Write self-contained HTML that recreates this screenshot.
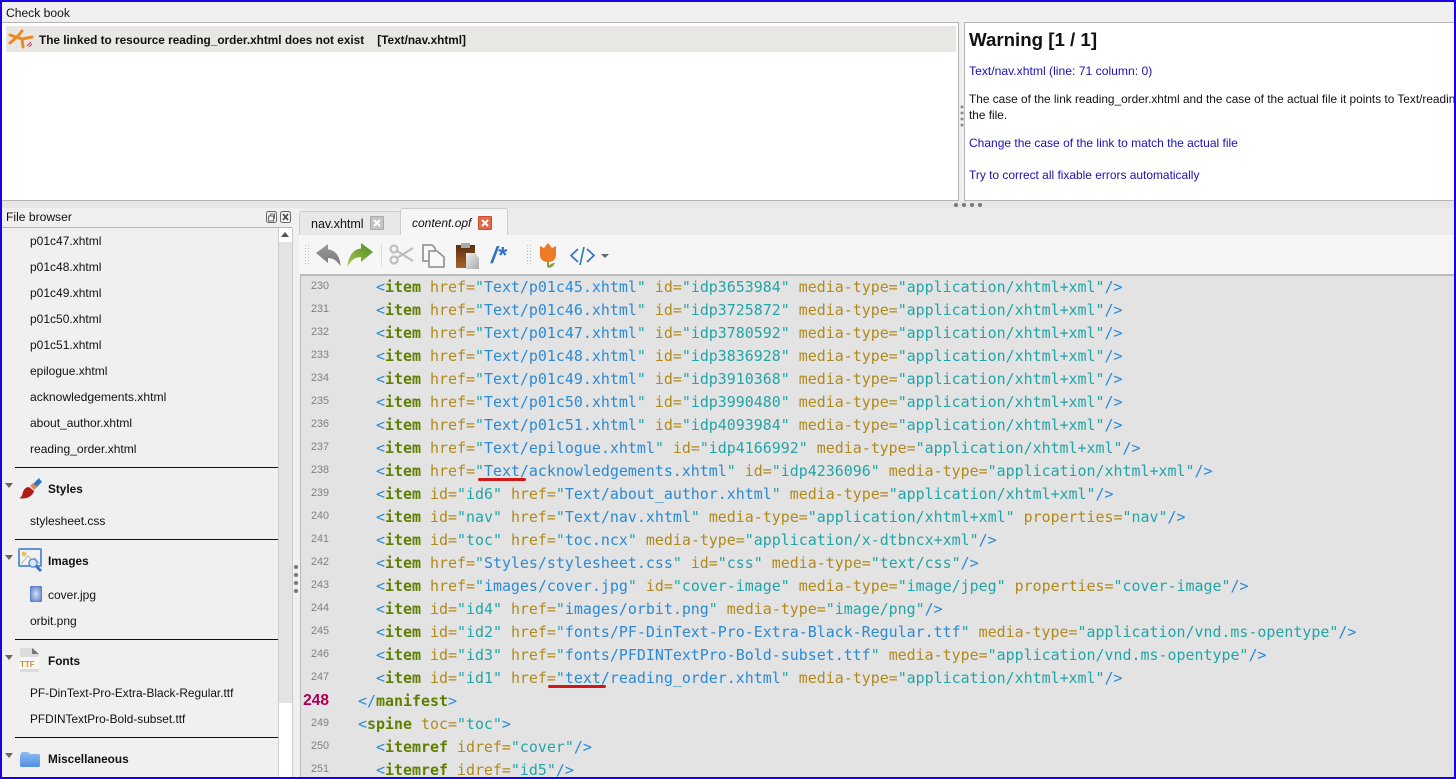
<!DOCTYPE html>
<html><head><meta charset="utf-8"><style>
html,body{margin:0;padding:0;width:1456px;height:779px;overflow:hidden;background:#f0f0f0}
body{position:relative;font-family:"Liberation Sans",sans-serif;font-size:12px;color:#111}
.a{position:absolute}
.t{position:absolute;white-space:pre;font-size:12px;line-height:16px;color:#111;margin-top:-1px}
.b{font-weight:bold;font-size:11.8px;margin-top:0}
.hr{position:absolute;left:15px;width:263px;height:1px;background:#111}
.lk{color:#1a12b8}
#code{position:absolute;left:300px;top:275px;width:1154px;height:502px;background:#e3e3e3;overflow:hidden;border-left:1px solid #bbb;border-top:1px solid #bbb;box-sizing:border-box}
.l{position:absolute;left:0;margin-top:1px;white-space:pre;font-family:"DejaVu Sans Mono",monospace;font-size:14.95px;line-height:23px;height:23px;color:#2a8ad6}
.n{position:absolute;left:10px;width:18px;text-align:right;font-family:"Liberation Sans",sans-serif;font-size:10.8px;line-height:20px;color:#808080}
i{font-style:normal;font-weight:bold;color:#5f7f00}
u{text-decoration:none;color:#b08a1a}
s{text-decoration:none;color:#22a5a8}
</style></head><body>

<div class="t" style="left:6px;top:6px;font-size:12.1px">Check book</div>
<div class="a" style="left:2px;top:22px;width:957px;height:179px;background:#fff;border:1px solid #b5b5b5;border-left:0;box-sizing:border-box"></div>
<div class="a" style="left:6px;top:26px;width:950px;height:26px;background:#e8e7e3"></div>
<svg class="a" style="left:8px;top:28px" width="26" height="22" viewBox="0 0 26 22"><path d="M2 7 L14 11 L24 9 M14 3 L10 8 L2 15 M14 11 L15 19" fill="none" stroke="#ee8a1c" stroke-width="3" stroke-linecap="round" stroke-linejoin="round"/><path d="M19 18l4-4M21 19l3-3" stroke="#d23a4a" stroke-width="1"/></svg>
<div class="t b" style="left:39px;top:32px">The linked to resource reading_order.xhtml does not exist&#160;&#160;&#160; [Text/nav.xhtml]</div>

<div class="a" style="left:964px;top:22px;width:490px;height:179px;background:#fff;border:1px solid #b5b5b5;border-right:0;box-sizing:border-box"></div>
<div class="t b" style="left:969px;top:30px;font-size:18.7px;line-height:20px">Warning [1 / 1]</div>
<div class="t lk" style="left:969px;top:64px;font-size:12.15px">Text/nav.xhtml (line: 71 column: 0)</div>
<div class="a" style="left:969px;top:91px;width:485px;height:34px;overflow:hidden"><div class="t" style="left:0;top:1px;font-size:11.85px">The case of the link reading_order.xhtml and the case of the actual file it points to Text/reading_order.xhtml differ
the file.</div></div>
<div class="t lk" style="left:969px;top:136px">Change the case of the link to match the actual file</div>
<div class="t lk" style="left:969px;top:168px;font-size:11.95px">Try to correct all fixable errors automatically</div>
<svg class="a" style="left:960px;top:105px" width="4" height="24"><g fill="#888"><circle cx="2" cy="2" r="1.5"/><circle cx="2" cy="8" r="1.5"/><circle cx="2" cy="14" r="1.5"/><circle cx="2" cy="20" r="1.5"/></g></svg>
<div class="a" style="left:0;top:201px;width:1456px;height:7px;background:#e6e6e6"></div>
<svg class="a" style="left:953px;top:202px" width="30" height="6"><g fill="#777"><circle cx="3" cy="3" r="2"/><circle cx="11" cy="3" r="2"/><circle cx="19" cy="3" r="2"/><circle cx="27" cy="3" r="2"/></g></svg>

<!-- file browser -->
<div class="t" style="left:6px;top:210px;font-size:12.1px">File browser</div>
<svg class="a" style="left:266px;top:211px" width="26" height="13" viewBox="0 0 26 13"><rect x=".5" y=".5" width="10" height="11" rx="2" fill="#f4f4f4" stroke="#666"/><rect x="2.5" y="5" width="5" height="5" fill="none" stroke="#666"/><path d="M4.5 5V3h4v4H7.5" fill="none" stroke="#666"/><rect x="14.5" y=".5" width="10" height="11" rx="2" fill="#f4f4f4" stroke="#666"/><path d="M17 3l5 6M22 3l-5 6" stroke="#444" stroke-width="1.6"/></svg>
<div class="a" style="left:2px;top:227px;width:290px;height:1px;background:#b5b5b5"></div>
<div class="a" style="left:278px;top:228px;width:15px;height:549px;background:#fff;border-left:1px solid #ccc;box-sizing:border-box"></div>
<div class="a" style="left:279px;top:242px;width:14px;height:461px;background:#e3e3e3"></div>
<div class="a" style="left:281px;top:232px;width:0;height:0;border:4px solid transparent;border-top:0;border-bottom:5px solid #555"></div>
<div class="a" style="left:292px;top:228px;width:1px;height:549px;background:#ccc"></div>

<div class="t" style="left:30px;top:234px">p01c47.xhtml</div>
<div class="t" style="left:30px;top:260px">p01c48.xhtml</div>
<div class="t" style="left:30px;top:286px">p01c49.xhtml</div>
<div class="t" style="left:30px;top:312px">p01c50.xhtml</div>
<div class="t" style="left:30px;top:338px">p01c51.xhtml</div>
<div class="t" style="left:30px;top:364px">epilogue.xhtml</div>
<div class="t" style="left:30px;top:390px;font-size:12.15px">acknowledgements.xhtml</div>
<div class="t" style="left:30px;top:416px">about_author.xhtml</div>
<div class="t" style="left:30px;top:442px;font-size:12.05px">reading_order.xhtml</div>

<div class="hr" style="top:467px"></div>
<div class="a" style="left:5px;top:483px;width:0;height:0;border:4px solid transparent;border-bottom:0;border-top:5px solid #666"></div>
<svg class="a" style="left:18px;top:477px" width="26" height="24" viewBox="0 0 26 24"><path d="M15 7l6-6 3 4-6 6z" fill="#2f78c8"/><path d="M12 9l3-3 4 4-3 3z" fill="#d88a5a"/><path d="M11 10l5 4c-1 5-8 9-15 7 3-1 3-3 4-6 1-3 3-5 6-5z" fill="#b01c14"/></svg>
<div class="t b" style="left:48px;top:481px">Styles</div>
<div class="t" style="left:30px;top:514px">stylesheet.css</div>

<div class="hr" style="top:539px"></div>
<div class="a" style="left:5px;top:555px;width:0;height:0;border:4px solid transparent;border-bottom:0;border-top:5px solid #666"></div>
<svg class="a" style="left:18px;top:548px" width="26" height="25" viewBox="0 0 26 25"><rect x="1" y="1" width="22" height="17" rx="1" fill="#f2f2f2" stroke="#5f93d2" stroke-width="2"/><circle cx="6" cy="6" r="2.5" fill="#f0c060"/><path d="M3 16l7-8 4 4 3-2 5 6" fill="none" stroke="#bbb"/><circle cx="15" cy="15" r="4" fill="#dbe8f5" stroke="#5f93d2" stroke-width="1.5"/><path d="M18 18l5 5" stroke="#3a78c0" stroke-width="3"/></svg>
<div class="t b" style="left:48px;top:553px">Images</div>
<svg class="a" style="left:30px;top:586px" width="12" height="16"><defs><radialGradient id="cv"><stop offset="0" stop-color="#d4def5"/><stop offset="1" stop-color="#7f9ad6"/></radialGradient></defs><rect width="12" height="16" rx="1" fill="#5f82c6"/><rect x="1" y="1" width="10" height="14" rx="3" fill="url(#cv)"/></svg>
<div class="t" style="left:48px;top:587px;margin-top:0">cover.jpg</div>
<div class="t" style="left:30px;top:614px">orbit.png</div>

<div class="hr" style="top:639px"></div>
<div class="a" style="left:5px;top:655px;width:0;height:0;border:4px solid transparent;border-bottom:0;border-top:5px solid #666"></div>
<svg class="a" style="left:19px;top:647px" width="22" height="26" viewBox="0 0 22 26"><path d="M1 1h13l6 6v18H1z" fill="#dcdcdc"/><path d="M13 1v6h7z" fill="#777"/><rect x="0" y="10" width="20" height="12" fill="#f6f6f6"/><text x="1" y="20" font-family="Liberation Sans" font-size="8" font-weight="bold" fill="#d0902a">TTF</text></svg>
<div class="t b" style="left:48px;top:653px">Fonts</div>
<div class="t" style="left:30px;top:686px;font-size:11.85px">PF-DinText-Pro-Extra-Black-Regular.ttf</div>
<div class="t" style="left:30px;top:712px;font-size:11.85px">PFDINTextPro-Bold-subset.ttf</div>

<div class="hr" style="top:737px"></div>
<div class="a" style="left:5px;top:753px;width:0;height:0;border:4px solid transparent;border-bottom:0;border-top:5px solid #666"></div>
<svg class="a" style="left:19px;top:750px" width="22" height="18" viewBox="0 0 22 18"><defs><linearGradient id="fd" x1="0" y1="0" x2="0" y2="1"><stop offset="0" stop-color="#8ebcf2"/><stop offset="1" stop-color="#4f8fe0"/></linearGradient></defs><path d="M1 5l2-3h6l2 2h9l1 1v11l-1 1H2l-1-1z" fill="url(#fd)"/></svg>
<div class="t b" style="left:48px;top:751px">Miscellaneous</div>

<svg class="a" style="left:294px;top:564px" width="4" height="30"><g fill="#777"><circle cx="2" cy="3" r="2"/><circle cx="2" cy="11" r="2"/><circle cx="2" cy="19" r="2"/><circle cx="2" cy="27" r="2"/></g></svg>

<!-- tabs -->
<div class="a" style="left:299px;top:208px;width:1157px;height:27px;background:#ececec"></div>
<div class="a" style="left:299px;top:211px;width:102px;height:24px;background:#e8e8e8;border:1px solid #ccc;border-bottom:0;border-radius:3px 3px 0 0;box-sizing:border-box"></div>
<div class="t" style="left:311px;top:216px;font-size:12.5px;margin-top:0">nav.xhtml</div>
<div class="a" style="left:370px;top:216px;width:14px;height:14px;background:#c4c4c4;border:1px solid #aaa;box-sizing:border-box;border-radius:1px"><svg width="12" height="12" style="display:block"><path d="M3 3l6 6M9 3l-6 6" stroke="#fff" stroke-width="2"/></svg></div>
<div class="a" style="left:400px;top:208px;width:108px;height:28px;background:#f6f6f6;border:1px solid #ccc;border-bottom:0;border-radius:3px 3px 0 0;box-sizing:border-box"></div>
<div class="t" style="left:412px;top:216px;font-size:12px;font-style:italic">content.opf</div>
<div class="a" style="left:478px;top:216px;width:14px;height:14px;background:#e2694a;border:1px solid #c85030;box-sizing:border-box;border-radius:1px"><svg width="12" height="12" style="display:block"><path d="M3 3l6 6M9 3l-6 6" stroke="#fff" stroke-width="2"/></svg></div>

<!-- toolbar -->
<div class="a" style="left:299px;top:235px;width:1157px;height:39px;background:#f6f6f6"></div>
<div class="a" style="left:300px;top:274px;width:1154px;height:1px;background:#bbb"></div>
<svg class="a" style="left:305px;top:240px" width="310" height="30" viewBox="0 0 310 30">
<defs>
<linearGradient id="ug" x1="0" y1="0" x2="0" y2="1"><stop offset="0" stop-color="#999"/><stop offset="1" stop-color="#7a7a7a"/></linearGradient>
<linearGradient id="rg" x1="0" y1="1" x2="1" y2="0"><stop offset="0" stop-color="#a6c84a"/><stop offset="1" stop-color="#4f8a28"/></linearGradient>
<linearGradient id="pg" x1="0" y1="0" x2="0" y2="1"><stop offset="0" stop-color="#5a2e10"/><stop offset="1" stop-color="#a8622a"/></linearGradient>
<linearGradient id="dg" x1="0" y1="0" x2="1" y2="1"><stop offset="0" stop-color="#eee"/><stop offset="1" stop-color="#aaa"/></linearGradient>
</defs>
<g stroke="#bcbcbc" stroke-width="1" stroke-dasharray="1 2"><path d="M.5 5v20M3.5 5v20M222.5 5v20M225.5 5v20"/></g>
<rect x="76" y="4" width="1" height="22" fill="#ddd"/>
<path d="M11 13 L23 4 V9.5 C31 10 35 17 35.5 26 C31 20 28 18 23 18 V23 Z" fill="url(#ug)"/>
<path d="M68 12 L56 3 V8.5 C48 9 43 17 42.5 27 C46 20 50 17 56 17 V22 Z" fill="url(#rg)"/>
<g fill="none" stroke="#bdbdbd" stroke-width="2.2"><circle cx="89" cy="9" r="3.5"/><circle cx="89" cy="20" r="3.5"/><path d="M92 11L108 21M92 18L108 8"/></g>
<g fill="#f8f8f8" stroke="#999" stroke-width="1.8" stroke-linejoin="round"><path d="M118 5h9l3 3v13h-12z"/><path d="M124 11h8l7 6v10h-15z"/></g>
<path d="M151 5h19v23h-19z" fill="url(#pg)"/><rect x="156" y="3" width="9" height="5" fill="#aaa"/><path d="M161 13h9l4 5v11h-13z" fill="url(#dg)"/>
<text x="186" y="23" font-family="Liberation Sans" font-size="23" font-weight="bold" font-style="italic" fill="#2a70c4">/*</text>
<path d="M235 6l4 2 4-5 4 5 4-2v9c0 5-4 7-8 7s-8-2-8-7z" fill="#ee7a28"/><path d="M243 21v6" stroke="#8aa040" stroke-width="2"/><path d="M243 28c3 0 6-2 7-5-4 0-6 2-7 5z" fill="#8aa040"/>
<path d="M273 9l-7 6.5 7 6.5M282 9l7 6.5-7 6.5M279 7l-4 18" fill="none" stroke="#2a70c4" stroke-width="1.6"/>
<path d="M296 14h8l-4 4z" fill="#666"/>
</svg>

<!-- editor -->
<div id="code">
<div class="n" style="top:0px">230</div>
<div class="n" style="top:23px">231</div>
<div class="n" style="top:46px">232</div>
<div class="n" style="top:69px">233</div>
<div class="n" style="top:92px">234</div>
<div class="n" style="top:115px">235</div>
<div class="n" style="top:138px">236</div>
<div class="n" style="top:161px">237</div>
<div class="n" style="top:184px">238</div>
<div class="n" style="top:207px">239</div>
<div class="n" style="top:230px">240</div>
<div class="n" style="top:253px">241</div>
<div class="n" style="top:276px">242</div>
<div class="n" style="top:299px">243</div>
<div class="n" style="top:322px">244</div>
<div class="n" style="top:345px">245</div>
<div class="n" style="top:368px">246</div>
<div class="n" style="top:391px">247</div>
<div class="n" style="top:415px;left:0;width:28px;font-size:15.5px;font-weight:bold;color:#a8005a">248</div>
<div class="n" style="top:437px">249</div>
<div class="n" style="top:460px">250</div>
<div class="n" style="top:483px">251</div>

<div class="l" style="left:75px;top:-1px">&lt;<i>item</i> <u>href=</u><s>"</s>Text/p01c45.xhtml<s>"</s> <u>id=</u><s>"idp3653984"</s> <u>media-type=</u><s>"application/xhtml+xml"</s>/&gt;</div>
<div class="l" style="left:75px;top:22px">&lt;<i>item</i> <u>href=</u><s>"</s>Text/p01c46.xhtml<s>"</s> <u>id=</u><s>"idp3725872"</s> <u>media-type=</u><s>"application/xhtml+xml"</s>/&gt;</div>
<div class="l" style="left:75px;top:45px">&lt;<i>item</i> <u>href=</u><s>"</s>Text/p01c47.xhtml<s>"</s> <u>id=</u><s>"idp3780592"</s> <u>media-type=</u><s>"application/xhtml+xml"</s>/&gt;</div>
<div class="l" style="left:75px;top:68px">&lt;<i>item</i> <u>href=</u><s>"</s>Text/p01c48.xhtml<s>"</s> <u>id=</u><s>"idp3836928"</s> <u>media-type=</u><s>"application/xhtml+xml"</s>/&gt;</div>
<div class="l" style="left:75px;top:91px">&lt;<i>item</i> <u>href=</u><s>"</s>Text/p01c49.xhtml<s>"</s> <u>id=</u><s>"idp3910368"</s> <u>media-type=</u><s>"application/xhtml+xml"</s>/&gt;</div>
<div class="l" style="left:75px;top:114px">&lt;<i>item</i> <u>href=</u><s>"</s>Text/p01c50.xhtml<s>"</s> <u>id=</u><s>"idp3990480"</s> <u>media-type=</u><s>"application/xhtml+xml"</s>/&gt;</div>
<div class="l" style="left:75px;top:137px">&lt;<i>item</i> <u>href=</u><s>"</s>Text/p01c51.xhtml<s>"</s> <u>id=</u><s>"idp4093984"</s> <u>media-type=</u><s>"application/xhtml+xml"</s>/&gt;</div>
<div class="l" style="left:75px;top:160px">&lt;<i>item</i> <u>href=</u><s>"</s>Text/epilogue.xhtml<s>"</s> <u>id=</u><s>"idp4166992"</s> <u>media-type=</u><s>"application/xhtml+xml"</s>/&gt;</div>
<div class="l" style="left:75px;top:183px">&lt;<i>item</i> <u>href=</u><s>"</s>Text/acknowledgements.xhtml<s>"</s> <u>id=</u><s>"idp4236096"</s> <u>media-type=</u><s>"application/xhtml+xml"</s>/&gt;</div>
<div class="l" style="left:75px;top:206px">&lt;<i>item</i> <u>id=</u><s>"id6"</s> <u>href=</u><s>"</s>Text/about_author.xhtml<s>"</s> <u>media-type=</u><s>"application/xhtml+xml"</s>/&gt;</div>
<div class="l" style="left:75px;top:229px">&lt;<i>item</i> <u>id=</u><s>"nav"</s> <u>href=</u><s>"</s>Text/nav.xhtml<s>"</s> <u>media-type=</u><s>"application/xhtml+xml"</s> <u>properties=</u><s>"nav"</s>/&gt;</div>
<div class="l" style="left:75px;top:252px">&lt;<i>item</i> <u>id=</u><s>"toc"</s> <u>href=</u><s>"</s>toc.ncx<s>"</s> <u>media-type=</u><s>"application/x-dtbncx+xml"</s>/&gt;</div>
<div class="l" style="left:75px;top:275px">&lt;<i>item</i> <u>href=</u><s>"</s>Styles/stylesheet.css<s>"</s> <u>id=</u><s>"css"</s> <u>media-type=</u><s>"text/css"</s>/&gt;</div>
<div class="l" style="left:75px;top:298px">&lt;<i>item</i> <u>href=</u><s>"</s>images/cover.jpg<s>"</s> <u>id=</u><s>"cover-image"</s> <u>media-type=</u><s>"image/jpeg"</s> <u>properties=</u><s>"cover-image"</s>/&gt;</div>
<div class="l" style="left:75px;top:321px">&lt;<i>item</i> <u>id=</u><s>"id4"</s> <u>href=</u><s>"</s>images/orbit.png<s>"</s> <u>media-type=</u><s>"image/png"</s>/&gt;</div>
<div class="l" style="left:75px;top:344px">&lt;<i>item</i> <u>id=</u><s>"id2"</s> <u>href=</u><s>"</s>fonts/PF-DinText-Pro-Extra-Black-Regular.ttf<s>"</s> <u>media-type=</u><s>"application/vnd.ms-opentype"</s>/&gt;</div>
<div class="l" style="left:75px;top:367px">&lt;<i>item</i> <u>id=</u><s>"id3"</s> <u>href=</u><s>"</s>fonts/PFDINTextPro-Bold-subset.ttf<s>"</s> <u>media-type=</u><s>"application/vnd.ms-opentype"</s>/&gt;</div>
<div class="l" style="left:75px;top:390px">&lt;<i>item</i> <u>id=</u><s>"id1"</s> <u>href=</u><s>"</s>text/reading_order.xhtml<s>"</s> <u>media-type=</u><s>"application/xhtml+xml"</s>/&gt;</div>
<div class="l" style="left:57px;top:413px">&lt;/<i>manifest</i>&gt;</div>
<div class="l" style="left:57px;top:436px">&lt;<i>spine</i> <u>toc=</u><s>"toc"</s>&gt;</div>
<div class="l" style="left:75px;top:459px">&lt;<i>itemref</i> <u>idref=</u><s>"cover"</s>/&gt;</div>
<div class="l" style="left:75px;top:482px">&lt;<i>itemref</i> <u>idref=</u><s>"id5"</s>/&gt;</div>
<div class="a" style="left:177px;top:202px;width:48px;height:3px;background:#d01818;border-radius:2px"></div>
<div class="a" style="left:247px;top:409px;width:58px;height:3px;background:#d01818;border-radius:2px"></div>
</div>

<!-- blue window border -->
<div class="a" style="left:0;top:0;width:1456px;height:779px;box-sizing:border-box;border:2px solid #1a00e8;pointer-events:none"></div>
</body></html>
